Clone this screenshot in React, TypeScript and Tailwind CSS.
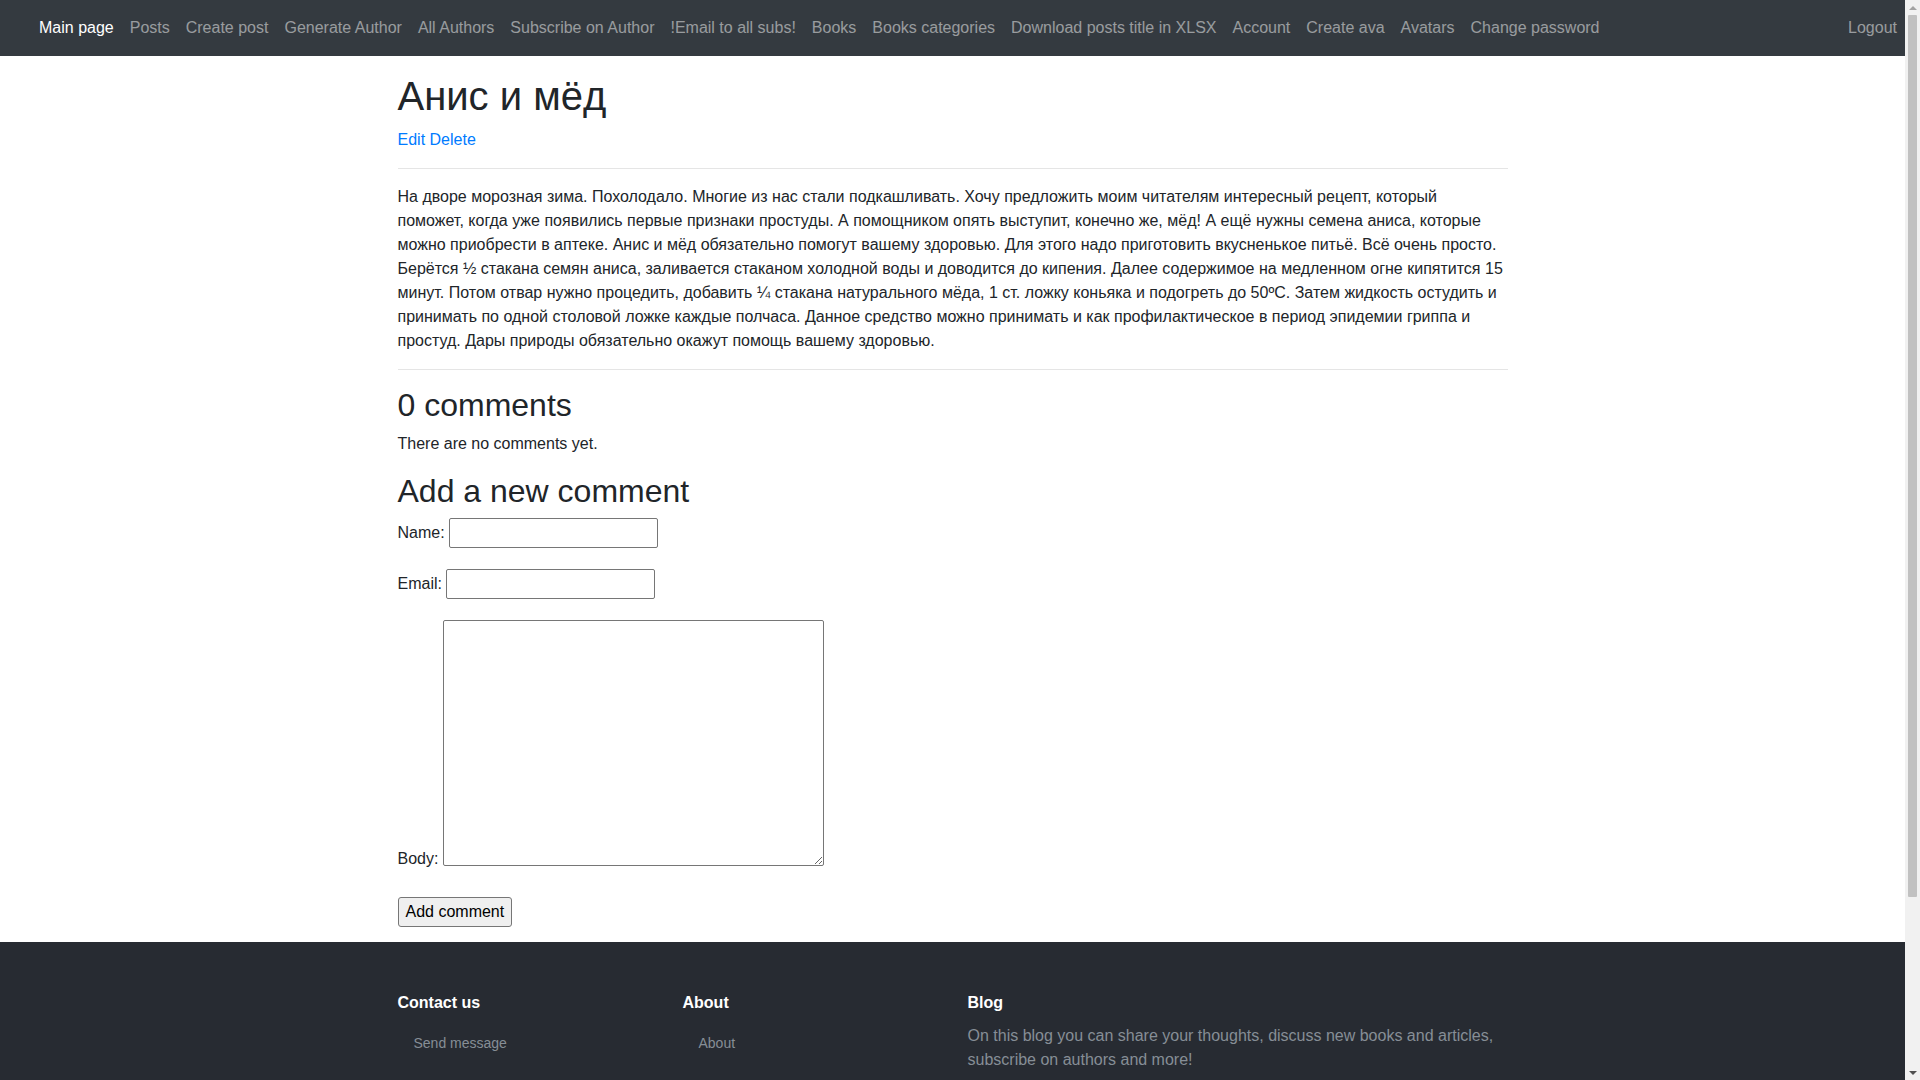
import React from "react";

const navLinks = [
  "Posts",
  "Create post",
  "Generate Author",
  "All Authors",
  "Subscribe on Author",
  "!Email to all subs!",
  "Books",
  "Books categories",
  "Download posts title in XLSX",
  "Account",
  "Create ava",
  "Avatars",
  "Change password",
];

const postBody =
  "На дворе морозная зима. Похолодало. Многие из нас стали подкашливать. Хочу предложить моим читателям интересный рецепт, который поможет, когда уже появились первые признаки простуды. А помощником опять выступит, конечно же, мёд! А ещё нужны семена аниса, которые можно приобрести в аптеке. Анис и мёд обязательно помогут вашему здоровью. Для этого надо приготовить вкусненькое питьё. Всё очень просто. Берётся ½ стакана семян аниса, заливается стаканом холодной воды и доводится до кипения. Далее содержимое на медленном огне кипятится 15 минут. Потом отвар нужно процедить, добавить ¼ стакана натурального мёда, 1 ст. ложку коньяка и подогреть до 50ºС. Затем жидкость остудить и принимать по одной столовой ложке каждые полчаса. Данное средство можно принимать и как профилактическое в период эпидемии гриппа и простуд. Дары природы обязательно окажут помощь вашему здоровью.";

function Navbar() {
  return (
    <nav className="h-[56px] bg-[#343a40] flex items-center justify-between pl-[31px]">
      <ul className="flex items-center">
        <li>
          <a className="block px-[8px] py-[8px] text-white leading-[24px]">Main page</a>
        </li>
        {navLinks.map((l) => (
          <li key={l}>
            <a className="block px-[8px] py-[8px] text-white/50 leading-[24px]">{l}</a>
          </li>
        ))}
      </ul>
      <a className="block px-[8px] py-[8px] text-white/50 leading-[24px]">Logout</a>
    </nav>
  );
}

function CommentForm() {
  return (
    <form>
      {/* Name / Email rows */}
      <div className="flex items-center gap-[4px] h-[30px] mb-[21px]">
        <label>Name:</label>
        <input type="text" className="w-[209px] h-[30px] border border-[#767676] rounded-[2px] px-[2px] bg-white" />
      </div>
      <div className="flex items-center gap-[4px] h-[30px] mb-[21px]">
        <label>Email:</label>
        <input type="email" className="w-[209px] h-[30px] border border-[#767676] rounded-[2px] px-[2px] bg-white" />
      </div>
      <div className="flex items-end gap-[5px]">
        <label className="mb-[-5px]">Body:</label>
        <textarea className="w-[381px] h-[246px] border border-[#767676] rounded-[2px] px-[2px] py-[1px] bg-white resize" />
      </div>
      <button
        type="button"
        className="mt-[31px] block border border-[#767676] rounded-[3px] bg-[#efefef] px-[7px] py-[2px] leading-[24px] text-black"
      >
        Add comment
      </button>
    </form>
  );
}

function Footer() {
  return (
    <footer className="bg-[#272b32] min-h-[342px] pt-[51px]">
      <div className="w-[1140px] mx-auto px-[15px]">
        <div className="flex -mx-[15px]">
          <div className="w-1/4 px-[15px]">
            <h5 className="text-white font-bold text-[16px] leading-[19px] mb-[12px]">Contact us</h5>
            <ul className="pt-[9px]">
              <li className="pl-[16px] text-[14px] leading-[21px] text-[#868e96]">Send message</li>
            </ul>
          </div>
          <div className="w-1/4 px-[15px]">
            <h5 className="text-white font-bold text-[16px] leading-[19px] mb-[12px]">About</h5>
            <ul className="pt-[9px]">
              <li className="pl-[16px] text-[14px] leading-[21px] text-[#868e96]">About</li>
            </ul>
          </div>
          <div className="w-1/2 px-[15px]">
            <h5 className="text-white font-bold text-[16px] leading-[19px] mb-[12px]">Blog</h5>
            <p className="text-[#868e96] leading-[24px]">
              On this blog you can share your thoughts, discuss new books and articles, subscribe on authors and more!
            </p>
          </div>
        </div>
      </div>
    </footer>
  );
}

// page scroll track on the right edge
function ScrollTrack() {
  return (
    <aside className="sticky top-0 w-[15px] h-screen shrink-0 bg-[#f1f1f1] flex flex-col items-center">
      <div className="h-[15px] flex items-center justify-center">
        <div className="w-0 h-0 border-l-[4px] border-r-[4px] border-b-[4px] border-l-transparent border-r-transparent border-b-[#a3a3a3]" />
      </div>
      <div className="w-[9px] h-[882px] rounded-[1px] bg-[#c1c1c1]" />
      <div className="flex-1" />
      <div className="h-[15px] flex items-center justify-center">
        <div className="w-0 h-0 border-l-[4px] border-r-[4px] border-t-[4px] border-l-transparent border-r-transparent border-t-[#505050]" />
      </div>
    </aside>
  );
}

export default function App() {
  return (
    <div className="flex items-start font-['Liberation_Sans',Arial,sans-serif] text-[16px] leading-[24px] text-[#212529] bg-white">
      <div className="flex-1 min-w-0">
        <Navbar />
        <main className="w-[1140px] mx-auto px-[15px] pt-[16px] pb-[15px]">
          <h1 className="text-[40px] leading-[48px] mb-[8px]">Анис и мёд</h1>
          <div className="text-[#007bff]">
            <a>Edit</a> <a>Delete</a>
          </div>
          <hr className="my-[16px] border-t border-black/10" />
          <p className="mb-[16px]">{postBody}</p>
          <hr className="mb-[16px] border-t border-black/10" />
          <h2 className="text-[32px] leading-[38px] mb-[8px]">0 comments</h2>
          <p className="mb-[16px]">There are no comments yet.</p>
          <h2 className="text-[32px] leading-[38px] mb-[8px]">Add a new comment</h2>
          <CommentForm />
        </main>
        <Footer />
      </div>
      <ScrollTrack />
    </div>
  );
}
